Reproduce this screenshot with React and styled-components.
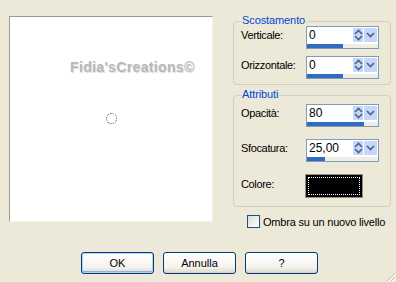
import React from "react";
import styled, { createGlobalStyle } from "styled-components";

const GlobalStyle = createGlobalStyle`
  html, body {
    margin: 0;
    padding: 0;
    background: #ece9d8;
  }
  body {
    font-family: "Liberation Sans", Arial, sans-serif;
    font-size: 11px;
    color: #000;
  }
`;

const Dialog = styled.div`
  width: 396px;
  height: 282px;
  background: #ece9d8;
  display: flex;
  flex-direction: column;
  position: relative;
  overflow: hidden;
`;

const Main = styled.div`
  display: flex;
  padding: 16px 0 0 9px;
  gap: 20px;
`;

const Preview = styled.div`
  position: relative;
  width: 202px;
  height: 204px;
  background: #fff;
  border-top: 1px solid #9a9a90;
  border-left: 1px solid #9a9a90;
  border-right: 1px solid #f4f3ee;
  border-bottom: 1px solid #f4f3ee;
`;

const Watermark = styled.span`
  position: absolute;
  left: 60px;
  top: 42px;
  font-family: "Liberation Sans", Arial, sans-serif;
  font-weight: bold;
  font-size: 14px;
  letter-spacing: 0.35px;
  color: #b8b8b8;
  text-shadow: 1px 1px 1px #dadada;
`;

const Marker = styled.div`
  position: absolute;
  left: 96px;
  top: 96px;
  width: 9px;
  height: 9px;
  border: 1px dotted #555;
  border-radius: 50%;
`;

const Side = styled.div`
  display: flex;
  flex-direction: column;
  width: 158px;
`;

const Group = styled.div`
  position: relative;
  margin-top: ${(p) => p.$top}px;
  border: 1px solid #d0d0bf;
  border-radius: 4px;
  padding: ${(p) => p.$pad};
  display: flex;
  flex-direction: column;
  gap: ${(p) => p.$gap}px;
`;

const Legend = styled.span`
  position: absolute;
  top: -8px;
  left: 7px;
  padding: 0 1px;
  background: #ece9d8;
  color: #0046d5;
  line-height: 13px;
  font-size: 11px;
  letter-spacing: -0.1px;
`;

const Row = styled.div`
  display: flex;
  align-items: center;
  height: ${(p) => p.$h || 23}px;
`;

const Label = styled.span`
  width: 65px;
  font-size: 11px;
  line-height: 13px;
  margin-top: -4px;
  letter-spacing: -0.35px;
`;

const Spin = styled.div`
  width: 71px;
  height: 21px;
  border: 1px solid #7f9db9;
  background: #fff;
  display: flex;
  flex-direction: column;
`;

const SpinTop = styled.div`
  display: flex;
  height: 16px;
  align-items: stretch;
`;

const Value = styled.span`
  flex: 1;
  padding: 1px 0 0 2px;
  font-size: 12px;
  line-height: 15px;
`;

const SpinBtn = styled.div`
  width: ${(p) => p.$w}px;
  margin: 1px ${(p) => (p.$last ? 1 : 0)}px 0 1px;
  height: 14px;
  background: #c6d6fb;
  border-radius: 1px;
  display: flex;
  align-items: center;
  justify-content: center;
`;

const Bar = styled.div`
  height: 4px;
  margin-top: 1px;
  background: #eeede6;
`;

const BarFill = styled.div`
  height: 100%;
  background: #316ac5;
`;

const Swatch = styled.div`
  width: 52px;
  height: 18px;
  border: 1px solid #8f8f88;
  background: #000;
  padding: 2px;
  margin-left: -1px;
`;

const SwatchFocus = styled.div`
  width: 50px;
  height: 16px;
  border: 1px dotted #fff;
`;

const CheckRow = styled.label`
  display: flex;
  align-items: center;
  gap: 3px;
  margin: 8px 0 0 14px;
  font-size: 11px;
  letter-spacing: -0.2px;
  white-space: nowrap;
`;

const Box = styled.span`
  width: 11px;
  height: 11px;
  border: 1px solid #1c5180;
  background: linear-gradient(135deg, #dcdcd7, #fff);
`;

const Buttons = styled.div`
  display: flex;
  gap: 9px;
  padding: 24px 0 0 81px;
`;

const Button = styled.button`
  width: 73px;
  height: 22px;
  padding: 0;
  font-family: "Liberation Sans", Arial, sans-serif;
  font-size: 11px;
  color: #000;
  border: 1px solid #003c74;
  border-radius: 3px;
  background: linear-gradient(#fff, #f4f3ee 70%, #dcd9cd);
  box-shadow: ${(p) =>
    p.$default
      ? "inset 0 0 0 1px #b9d1fa, inset 0 -1px 0 1px #8eb0ec"
      : "inset 0 -1px 0 #d6d0c5"};
`;

const Grip = styled.svg`
  position: absolute;
  right: 0;
  bottom: 0;
`;

const Arrows = () => (
  <svg width="9" height="12" viewBox="0 0 9 12">
    <path d="M1 5 L4.5 1.5 L8 5" fill="none" stroke="#4d6185" strokeWidth="1.6" />
    <path d="M1 7 L4.5 10.5 L8 7" fill="none" stroke="#4d6185" strokeWidth="1.6" />
  </svg>
);

const Down = () => (
  <svg width="9" height="6" viewBox="0 0 9 6">
    <path d="M1 1 L4.5 4.5 L8 1" fill="none" stroke="#4d6185" strokeWidth="1.6" />
  </svg>
);

const SpinField = ({ value, pct }) => (
  <Spin>
    <SpinTop>
      <Value>{value}</Value>
      <SpinBtn $w={10}>
        <Arrows />
      </SpinBtn>
      <SpinBtn $w={13} $last>
        <Down />
      </SpinBtn>
    </SpinTop>
    <Bar>
      <BarFill style={{ width: `${pct}%` }} />
    </Bar>
  </Spin>
);

export default function App() {
  return (
    <Dialog>
      <GlobalStyle />
      <Main>
        <Preview>
          <Watermark>Fidia'sCreations©</Watermark>
          <Marker />
        </Preview>
        <Side>
          <Group $top={5} $pad="4px 0 5px 7px" $gap={7}>
            <Legend>Scostamento</Legend>
            <Row>
              <Label>Verticale:</Label>
              <SpinField value="0" pct={50} />
            </Row>
            <Row>
              <Label>Orizzontale:</Label>
              <SpinField value="0" pct={50} />
            </Row>
          </Group>
          <Group $top={10} $pad="8px 0 8px 7px" $gap={12}>
            <Legend>Attributi</Legend>
            <Row>
              <Label>Opacità:</Label>
              <SpinField value="80" pct={80} />
            </Row>
            <Row>
              <Label>Sfocatura:</Label>
              <SpinField value="25,00" pct={25} />
            </Row>
            <Row $h={24}>
              <Label>Colore:</Label>
              <Swatch>
                <SwatchFocus />
              </Swatch>
            </Row>
          </Group>
          <CheckRow>
            <Box />
            Ombra su un nuovo livello
          </CheckRow>
        </Side>
      </Main>
      <Buttons>
        <Button $default>OK</Button>
        <Button>Annulla</Button>
        <Button>?</Button>
      </Buttons>
      <Grip width="12" height="12" viewBox="0 0 12 12">
        <path d="M11 3 L3 11 M11 7 L7 11" stroke="#c7c5b2" strokeWidth="1" />
        <path d="M12 4 L4 12 M12 8 L8 12" stroke="#fff" strokeWidth="1" />
      </Grip>
    </Dialog>
  );
}
